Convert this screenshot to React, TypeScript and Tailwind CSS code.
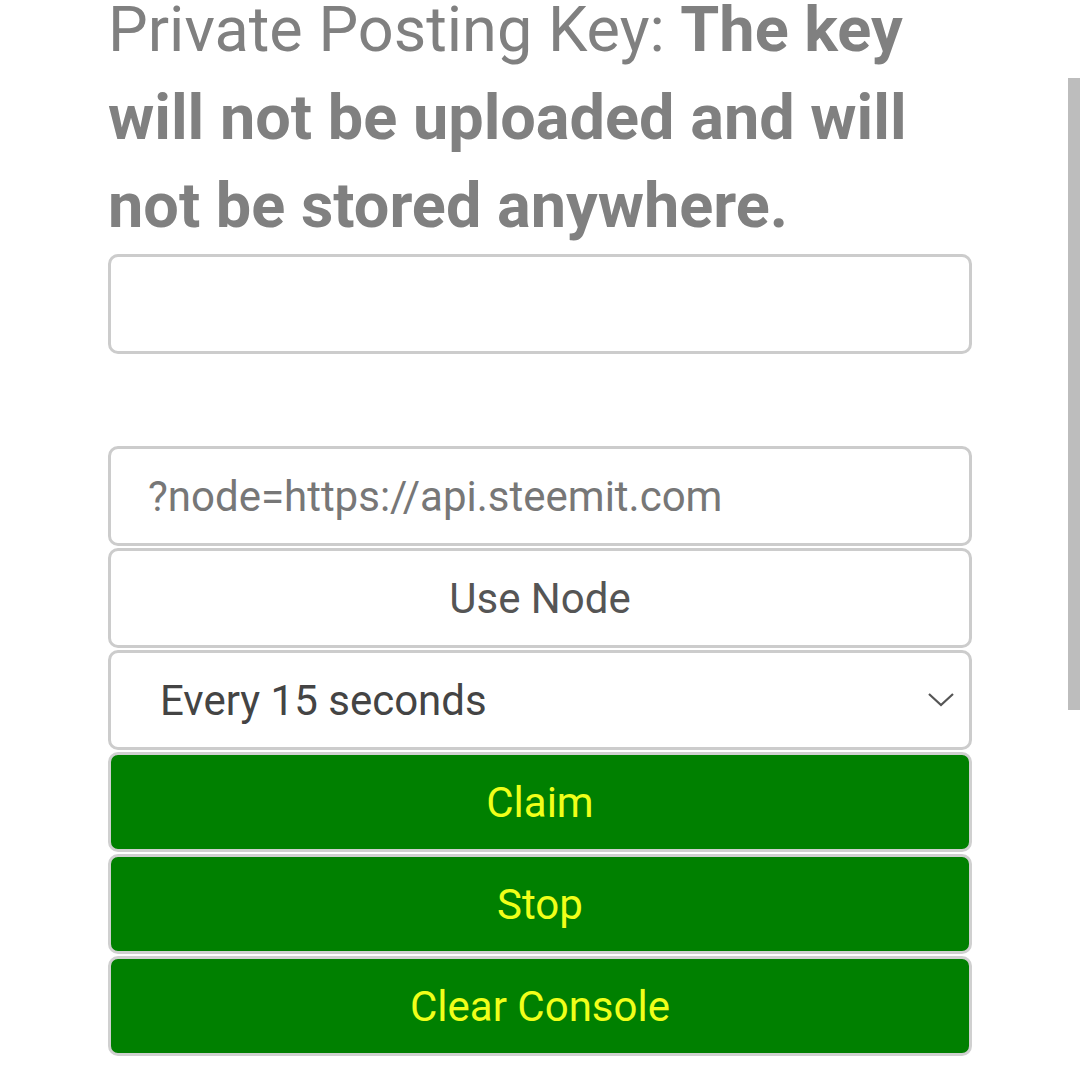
import React from "react";

export default function App() {
  const box =
    "h-[100px] w-full rounded-[10px] border-[3px] border-[#cccccc] bg-white";
  const green =
    "h-[100px] w-full rounded-[10px] border-[3px] border-[#d0d0d0] bg-[#008000] text-[42px] text-[#f0ff1a] flex items-center justify-center";
  return (
    <div
      className="relative w-[1080px] h-[1086px] overflow-hidden bg-white"
      style={{ fontFamily: "Roboto, 'Noto Sans', sans-serif" }}
    >
      <div className="w-[864px] ml-[108px] flex flex-col">
        <div className="mt-[-14px] text-[63px] leading-[88px] text-[#808080]">
          Private Posting Key: <b className="font-bold">The key will not be uploaded and will not be stored anywhere.</b>
        </div>
        <div className={`${box} mt-[4px]`} />
        <div className="h-[92px]" />
        <div className={`${box} flex items-center pl-[37px] text-[42px] text-[#777777]`}>
          ?node=https://api.steemit.com
        </div>
        <div className={`${box} mt-[2px] flex items-center justify-center text-[42px] text-[#555555]`}>
          Use Node
        </div>
        <div className={`${box} mt-[2px] flex items-center justify-between pl-[49px] pr-[14px] text-[42px] text-[#444444]`}>
          <span>Every 15 seconds</span>
          <svg width="28" height="16" viewBox="0 0 28 16" fill="none">
            <path d="M2 2 L14 13 L26 2" stroke="#555" strokeWidth="2.2" />
          </svg>
        </div>
        <div className={`${green} mt-[2px]`}>Claim</div>
        <div className={`${green} mt-[2px]`}>Stop</div>
        <div className={`${green} mt-[2px]`}>Clear Console</div>
      </div>
      <div className="absolute left-[1068px] top-[78px] w-[12px] h-[632px] bg-[#bdbdbd]" />
    </div>
  );
}
